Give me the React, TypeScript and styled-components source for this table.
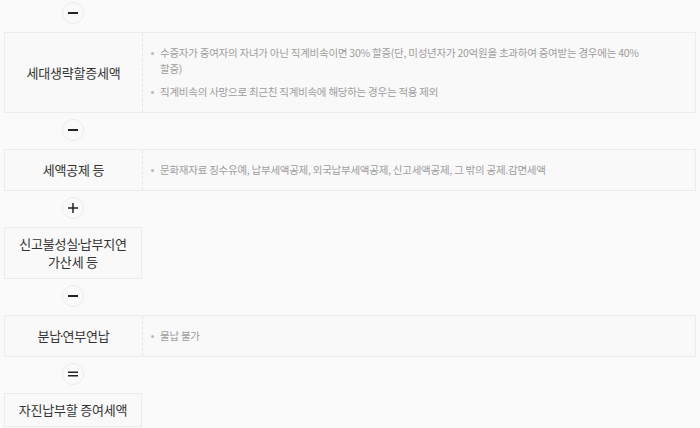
import React from "react";
import styled, { createGlobalStyle } from "styled-components";

const Global = createGlobalStyle`
  html, body { margin: 0; padding: 0; background: #fafafa; }
  body { font-family: "Noto Sans CJK KR", "Noto Sans", sans-serif; }
`;

const Page = styled.div`
  width: 700px;
  height: 428px;
  overflow: hidden;
  box-sizing: border-box;
  padding: 2px 4px 0 4px;
  background: #fafafa;
`;

const OpRow = styled.div<{ $first?: boolean }>`
  width: 138px;
  display: flex;
  justify-content: center;
  margin: ${(p) => (p.$first ? "0 0 8px" : "6px 0 8px")};
`;

const OpCircle = styled.div`
  width: 22px;
  height: 22px;
  box-sizing: border-box;
  border-radius: 50%;
  border: 1px solid #ececec;
  background: #fafafa;
  display: flex;
  align-items: center;
  justify-content: center;
`;

const Row = styled.div<{ $labelOnly?: boolean }>`
  display: grid;
  grid-template-columns: ${(p) => (p.$labelOnly ? "136px" : "137px 1fr")};
  border: 1px solid #ececec;
  background: #f9f9f9;
  width: ${(p) => (p.$labelOnly ? "138px" : "auto")};
  box-sizing: border-box;
`;

const Label = styled.div`
  display: flex;
  align-items: center;
  justify-content: center;
  text-align: center;
  font-size: 13px;
  line-height: 18px;
  letter-spacing: -0.2px;
  color: #333;
  padding: 7px 4px;
`;

const Dot = styled.span`
  font-family: "Noto Sans", sans-serif;
  letter-spacing: 0;
  margin: 0 -1px;
`;

const Desc = styled.ul`
  margin: 0;
  list-style: none;
  padding: 12px 40px 12px 8px;
  border-left: 1px dashed #e6e6e6;
`;

const Item = styled.li`
  position: relative;
  padding-left: 9px;
  font-size: 10.5px;
  line-height: 16px;
  letter-spacing: -0.25px;
  color: #9d9d9d;
  word-break: keep-all;
  & + & { margin-top: 7px; }
  &::before {
    content: "";
    position: absolute;
    left: 0;
    top: 7px;
    width: 3px;
    height: 3px;
    border-radius: 50%;
    background: #b8b8b8;
  }
`;

type OpKind = "minus" | "plus" | "equal";

const OpIcon = ({ kind }: { kind: OpKind }) => (
  <svg width="12" height="12" viewBox="0 0 12 12">
    {kind === "minus" && <rect x="1" y="5" width="10" height="2" fill="#222" />}
    {kind === "plus" && (
      <>
        <rect x="1" y="5.25" width="10" height="1.5" fill="#222" />
        <rect x="5.25" y="1" width="1.5" height="10" fill="#222" />
      </>
    )}
    {kind === "equal" && (
      <>
        <rect x="1" y="3.5" width="10" height="1.5" fill="#222" />
        <rect x="1" y="7" width="10" height="1.5" fill="#222" />
      </>
    )}
  </svg>
);

const Op = ({ kind, first }: { kind: OpKind; first?: boolean }) => (
  <OpRow $first={first}>
    <OpCircle>
      <OpIcon kind={kind} />
    </OpCircle>
  </OpRow>
);

export default function App() {
  return (
    <Page>
      <Global />
      <Op kind="minus" first />
      <Row>
        <Label>세대생략할증세액</Label>
        <Desc>
          <Item>
            수증자가 중여자의 자녀가 아닌 직계비속이면 30% 할증(단, 미성년자가 20억원을 초과하여 증여받는 경우에는 40% 할증)
          </Item>
          <Item>직계비속의 사망으로 최근친 직계비속에 해당하는 경우는 적용 제외</Item>
        </Desc>
      </Row>
      <Op kind="minus" />
      <Row>
        <Label>세액공제 등</Label>
        <Desc>
          <Item>문화재자료 징수유예, 납부세액공제, 외국납부세액공제, 신고세액공제, 그 밖의 공제.감면세액</Item>
        </Desc>
      </Row>
      <Op kind="plus" />
      <Row $labelOnly>
        <Label>
          <span>
            신고불성실<Dot>·</Dot>납부지연
            <br />
            가산세 등
          </span>
        </Label>
      </Row>
      <Op kind="minus" />
      <Row>
        <Label>
          <span>
            분납<Dot>·</Dot>연부연납
          </span>
        </Label>
        <Desc>
          <Item>물납 불가</Item>
        </Desc>
      </Row>
      <Op kind="equal" />
      <Row $labelOnly>
        <Label>자진납부할 증여세액</Label>
      </Row>
    </Page>
  );
}
